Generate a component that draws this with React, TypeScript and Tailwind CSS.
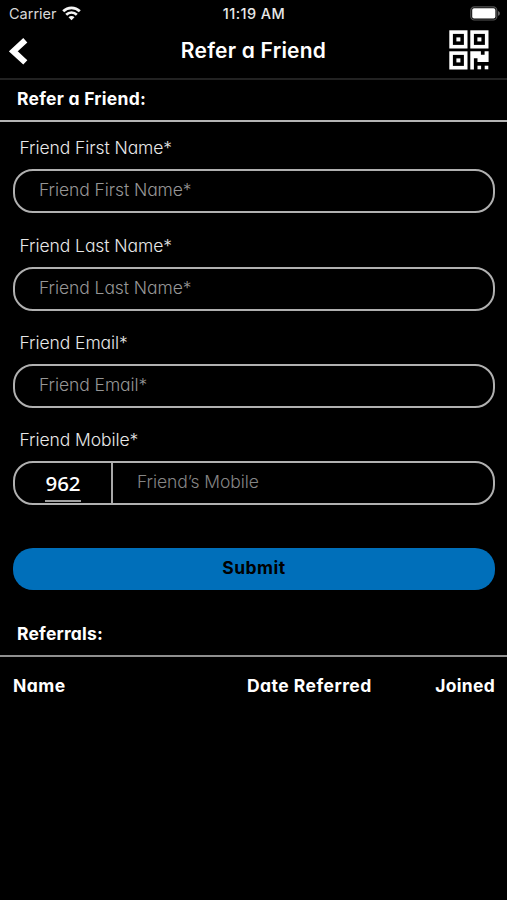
import React from "react";

const light = "font-light [font-feature-settings:'cv11'] whitespace-nowrap leading-[24px]";
const bold = "font-bold [font-feature-settings:'cv11'] whitespace-nowrap leading-[24px]";

function WifiIcon() {
  return (
    <svg width="19" height="15" viewBox="0 0 19 15" fill="none" stroke="#f5f5f5" strokeWidth="2.7">
      <path d="M1.2 5.3a11.7 11.7 0 0 1 16.6 0" />
      <path d="M4.2 8.7a7.5 7.5 0 0 1 10.6 0" />
      <path d="M9.5 14.3 6.5 11.2a4.2 4.2 0 0 1 6 0Z" fill="#f5f5f5" stroke="none" />
    </svg>
  );
}

function BatteryIcon() {
  return (
    <svg width="31" height="15" viewBox="0 0 31 15">
      <rect x="0.8" y="0.8" width="26" height="13.2" rx="3.6" fill="none" stroke="#555" strokeWidth="1.2" />
      <rect x="2.2" y="2.2" width="23.2" height="10.4" rx="1.8" fill="#fff" />
      <path d="M28 5v4.8c1.1-.4 1.9-1.3 1.9-2.4S29.1 5.4 28 5Z" fill="#666" />
    </svg>
  );
}

function QrIcon() {
  return (
    <svg width="40" height="40" viewBox="0 0 40 40">
      <g fill="none" stroke="#fff" strokeWidth="3.6">
        <rect x="2.1" y="2.1" width="14.6" height="14.6" />
        <rect x="23.1" y="2.1" width="14.6" height="14.6" />
        <rect x="2.1" y="23.1" width="14.6" height="14.6" />
      </g>
      <g fill="#fff">
        <rect x="7.4" y="7.4" width="4" height="4" />
        <rect x="28.4" y="7.4" width="4" height="4" />
        <rect x="7.4" y="28.4" width="4" height="4" />
        <path d="M21.3 21.3h10.6v3.5h3.7v-3.5h4v10.6H28.5v-3.6h-3.6v11.2h-3.6Z" />
        <rect x="28.5" y="35.7" width="3.6" height="3.6" />
        <rect x="35.7" y="35.7" width="3.6" height="3.6" />
      </g>
    </svg>
  );
}

function Field({ label }: { label: string }) {
  return (
    <div className="h-[97.3px]">
      <div className={`${light} pl-[6.5px] text-[17.5px] tracking-[-0.08px] text-[#e8e8e8]`}>{label}</div>
      <div className="mt-[9px] flex h-[44px] rounded-[20px] border-2 border-[#b0b0b0] pl-[24px] pt-[7px]">
        <span className={`${light} text-[17.5px] tracking-[-0.08px] text-[#969696]`}>{label}</span>
      </div>
    </div>
  );
}

export default function App() {
  return (
    <main className="flex h-[900px] w-[507px] flex-col overflow-hidden bg-black font-[Inter,sans-serif] text-white">
      <div className="grid h-[28px] grid-cols-3 items-center px-[9px] text-[14.5px] leading-[28px]">
        <div className="flex items-center gap-[5px]">
          <span className="text-[#d8d8d8]">Carrier</span>
          <div className="-mt-[2px]"><WifiIcon /></div>
        </div>
        <span className="pl-[1px] text-center font-medium tracking-[0.45px] text-[#e8e8e8]">11:19 AM</span>
        <div className="-mr-[3px] -mt-[2px] flex justify-end"><BatteryIcon /></div>
      </div>
      <header className="flex h-[52px] items-start justify-between border-b-2 border-[#222] pl-[9px] pr-[18px]">
        <svg className="mt-[9px]" width="40" height="29" viewBox="0 0 40 29" fill="none">
          <path d="M16.3 3.2 4.3 14.3 16.3 25.4" stroke="#fff" strokeWidth="6" />
        </svg>
        <h1 className="mt-[9px] pl-[9px] [font-feature-settings:'cv11'] text-[21px] font-semibold leading-[28px] tracking-[0.22px]">Refer a Friend</h1>
        <div className="mt-[2px]"><QrIcon /></div>
      </header>
      <h2 className={`${bold} h-[42px] border-b-2 border-[#b4b4b4] pl-[17px] pt-[7px] text-[17.5px] tracking-[0.25px]`}>Refer a Friend:</h2>
      <form className="pl-[13px] pr-[12px] pt-[14.4px]">
        <Field label="Friend First Name*" />
        <Field label="Friend Last Name*" />
        <Field label="Friend Email*" />
        <div className={`${light} pl-[6.5px] text-[17.5px] tracking-[-0.08px] text-[#e8e8e8]`}>Friend Mobile*</div>
        <div className="mt-[9px] flex h-[44px] rounded-[20px] border-2 border-[#b0b0b0]">
          <div className="flex w-[98px] justify-center border-r-2 border-[#a8a8a8]">
            <span className="mt-[7px] h-[32px] border-b-2 border-[#a0a0a0] font-['Noto_Sans',sans-serif] text-[20.5px] font-medium leading-[27px]">962</span>
          </div>
          <span className={`${light} pl-[24px] pt-[7px] text-[17.5px] tracking-[-0.08px] text-[#858585]`}>Friend’s Mobile</span>
        </div>
        <button type="button" className={`${bold} mt-[42.4px] block h-[42px] w-full rounded-[20px] bg-[#006fba] pb-[2px] text-[17.5px] tracking-[0.5px] text-black`}>Submit</button>
      </form>
      <h2 className={`${bold} mt-[32px] h-[35px] border-b-2 border-[#8f8f8f] pl-[17px] text-[17.5px] tracking-[0.2px]`}>Referrals:</h2>
      <div className={`${bold} mt-[17px] flex pl-[13px] pr-[12px] text-[17.5px] tracking-[0.47px]`}>
        <span className="w-[234px]">Name</span>
        <span>Date Referred</span>
        <span className="ml-auto tracking-[0.3px]">Joined</span>
      </div>
    </main>
  );
}
